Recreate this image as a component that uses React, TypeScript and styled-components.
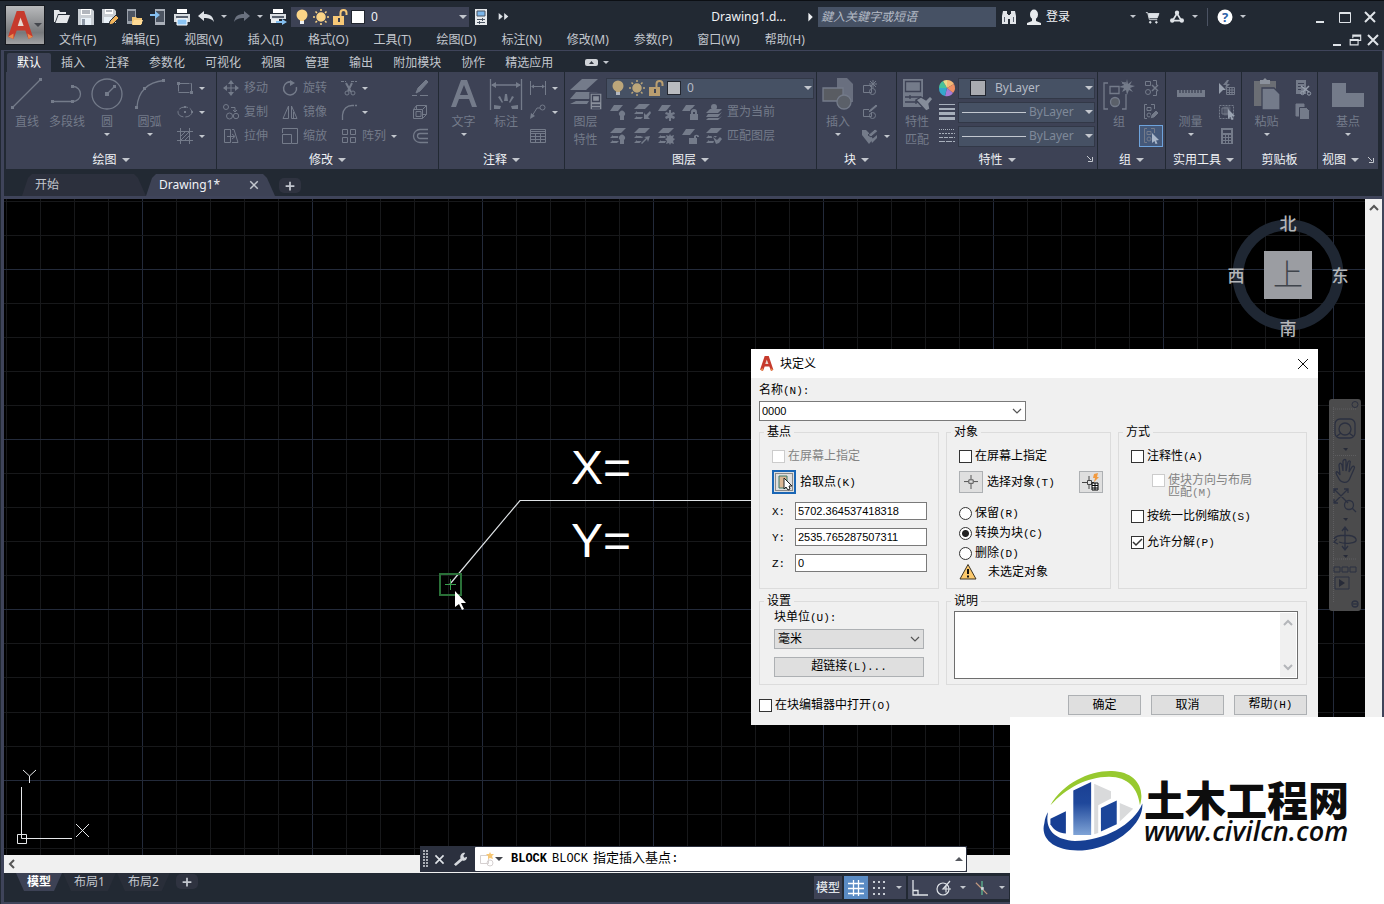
import React from "react";
import styled, { createGlobalStyle, css } from "styled-components";

const c = {
  chrome: "#222933",
  ribbon: "#3d4255",
  frame: "#3f445a",
  field: "#465164",
  text: "#c3c7ce",
  bright: "#f0f2f5",
  dim: "#747b8a",
  face: "#f0f0f0",
  faceLine: "#dcdcdc",
  button: "#dfdfdf",
  buttonLine: "#adb0b3",
};

const ui = `"Noto Sans", "Noto Sans CJK SC", sans-serif`;

const Global = createGlobalStyle`
  * { box-sizing: border-box; }
  body { margin: 0; background: ${c.chrome}; font-family: ${ui}; font-size: 12px; line-height: 16px; }
  button, input, select, textarea { font: inherit; color: inherit; margin: 0; border-radius: 0; }
  button { background: none; border: 0; padding: 0; }
  fieldset, legend { margin: 0; padding: 0; border: 0; }
  svg { display: block; flex: none; }
`;

/* ---------- icons ---------- */

const glyphs: Record<string, React.ReactNode> = {
  open: <g fill="#e4e7ea" stroke="none"><path d="M0 1h5l1 2h6v2H4L1 13H0z" /><path d="M4.500 6H16l-3 8H1.500z" /></g>,
  save: <g stroke="none"><path d="M0 0h14l2 2v14H0z" fill="#c9ced4" /><path d="M3 0h10v6H3z" fill="#fff" /><path d="M4 2h8M4 4h8" stroke="#666f7c" /><path d="M3 9h10v7H3z" fill="#e9f1f8" /><path d="M4 10h3v6H4z" fill="#8d97a5" /></g>,
  saveAs: <g stroke="none"><path d="M0 0h12l2 2v12H0z" fill="#c9ced4" /><path d="M3 0h8v5H3z" fill="#fff" /><path d="M4 2h6" stroke="#666f7c" /><path d="M2 8h8v6H2z" fill="#e9f1f8" /><path d="M7 16l1-4 6-6 3 3-6 6z" fill="#f1b45c" stroke="#222933" /></g>,
  openWeb: <g stroke="none"><path d="M1 0h9v15H1z" fill="#9aa1ab" /><path d="M2 2h7v10H2z" fill="#4c5461" /><path d="M6 8h4l1 1h5v6H6z" fill="#f3c878" /><path d="M8 11h9l-2 5H6z" fill="#ffdb96" /></g>,
  saveWeb: <g stroke="none"><path d="M5 0h10v16H5z" fill="#aab0b9" /><path d="M6 2h8v11H6z" fill="#4c5461" /><path d="M0 5h5V2l5 4-5 4V7H0z" fill="#85bff0" /></g>,
  print: <g stroke="none"><path d="M3 0h10v4H3z" fill="#fff" /><path d="M0 5h16v8H0z" fill="#d9dde1" /><path d="M2 7h12v2H2z" fill="#59616e" /><path d="M3 10h10v6H3z" fill="#8bc4f4" stroke="#fff" /></g>,
  batch: <g stroke="none"><path d="M3 0h10v4H3z" fill="#fff" /><path d="M0 5h16v5H0z" fill="#d9dde1" /><path d="M2 7h12v2H2z" fill="#59616e" /><path d="M1 10h8v4H1z" fill="#e9edf0" /><path d="M6 12h6v-2l5 3-5 3v-2H6z" fill="#85bff0" /></g>,
  undo: <path d="M0 7l6-5v3c6 0 9 2 10 8-2-3-5-4-10-4v3z" fill="currentColor" stroke="none" />,
  redo: <path d="M16 7l-6-5v3C4 5 1 7 0 13c2-3 5-4 10-4v3z" fill="currentColor" stroke="none" />,
  bulb: <g stroke="none"><circle cx="8" cy="6" r="5.500" fill="#fbd487" /><path d="M6 10h4v3H6z" fill="#fbd487" /><path d="M6 12h4v3H6z" fill="#eef0f2" /></g>,
  sun: <g stroke="#fbd487" strokeWidth="1.500"><circle cx="8" cy="8" r="4" fill="#fbd487" /><path d="M8 0v2M8 14v2M0 8h2M14 8h2M2.500 2.500l1.500 1.500M12 12l1.500 1.500M2.500 13.500L4 12M12 4l1.500-1.500" /></g>,
  lock: <g stroke="none"><path d="M1 7h11v9H1z" fill="#f7c877" /><path d="M8.500 7V4a3 3 0 0 1 6 0v2" fill="none" stroke="#f7c877" strokeWidth="2" /><path d="M6 9h2v4H6z" fill="#3d3f4c" /></g>,
  sheet: <g stroke="none"><path d="M2 0h12v16H2z" fill="#e6e9ec" /><path d="M4 2h8v5H4z" fill="#7bb6ea" stroke="#4a5361" /><path d="M4 10.500h8M4 13.500h8" stroke="#4a5361" /><path d="M9 9h1v3H9zM6 12h1v3H6z" fill="#4a5361" /></g>,
  more: <path d="M1 3l6 5-6 5zM9 3l6 5-6 5z" fill="currentColor" stroke="none" />,
  play: <path d="M5 3l5 5-5 5z" fill="currentColor" stroke="none" />,
  find: <g fill="#e2e5e9" stroke="none"><path d="M2 2h4v3h1v10H1V7zM10 2h4l1 5v8H9V5h1zM7 6h2v4H7z" /><path d="M3 8h1v5H3zM12 8h1v5h-1z" fill="#59616e" /></g>,
  user: <g fill="#e8ebee" stroke="none"><ellipse cx="8" cy="5.500" rx="4" ry="5" /><path d="M6 9h4v3l5 2v2H1v-2l5-2z" /></g>,
  cart: <g><path d="M1 3h2l2 8h9" stroke="currentColor" /><path d="M4 4h12l-2 5H5z" fill="currentColor" /><circle cx="6" cy="14" r="1" fill="currentColor" /><circle cx="13" cy="14" r="1" fill="currentColor" /></g>,
  a360: <g strokeWidth="2"><path d="M8 4L3 12h10z" /><circle cx="8" cy="3" r="1.500" fill="currentColor" /><circle cx="2.500" cy="12" r="1.500" fill="currentColor" /><circle cx="13.500" cy="12" r="1.500" fill="currentColor" /></g>,
  min: <path d="M4 13h8" strokeWidth="2" />,
  max: <path d="M2.500 3.500h11v10h-11zM2 4.500h12" />,
  close: <path d="M3 3l10 10M13 3L3 13" strokeWidth="2" />,
  restore: <path d="M5.500 6V2.500h9v6H12M5 3.500h10M2.500 7.500h9v6h-9zM2 8.500h10" strokeWidth="1.300" />,
  plus: <path d="M8 3v10M3 8h10" strokeWidth="2" />,
  rect: <g><path d="M1.500 3.500h13v9h-13z" strokeDasharray="11 1" /><path d="M0 2h3v3H0zM13 11h3v3h-3z" fill="currentColor" stroke="none" /></g>,
  ellipse: <g><ellipse cx="8" cy="8" rx="7" ry="5" strokeDasharray="9 2" /><path d="M7 7h2v2H7zM14 7h2v2h-2zM7 2h2v2H7z" fill="currentColor" stroke="none" /></g>,
  hatch: <path d="M3.500 0v16M12.500 0v16M0 3.500h16M0 12.500h16M4 8l4-4M4 12l8-8M8 12l4-4" />,
  move: <g><path d="M8 1v14M1 8h14" /><path d="M8 0l3 4H5zM8 16l3-4H5zM0 8l4-3v6zM16 8l-4-3v6z" fill="currentColor" stroke="none" /></g>,
  rotate: <g strokeWidth="1.500"><path d="M10 2.200A6.500 6.500 0 1 0 14.400 7" /><path d="M8 0l5 3-5 3z" fill="currentColor" stroke="none" /></g>,
  trim: <g><path d="M0 1.500h5M10 1.500h6" strokeDasharray="3 1" /><path d="M5 3l5 9M11 3L7 11" strokeWidth="2" /><circle cx="6" cy="13" r="2" /><circle cx="12" cy="13" r="2" /></g>,
  erase: <g><path d="M14 0l2 2-8 9-4 2 2-5z" fill="currentColor" /><path d="M0 15.500h5M8 15.500h8" /></g>,
  copy: <g><circle cx="3" cy="3" r="2.500" /><circle cx="6.500" cy="12" r="3" /><circle cx="13" cy="12" r="2.700" /><path d="M8 3.500h4v4M10 6l2 2 2-2" /></g>,
  mirror: <path d="M6.500 2v12.500H1zM9.500 2v12.500H15zM11.500 8v6" />,
  fillet: <g strokeWidth="1.300"><path d="M1.500 16v-5M1.500 11C2 5 6 1.500 11 1.500" /><path d="M11 1.500h5" strokeDasharray="2 1" /></g>,
  box: <path d="M1.500 5.500h9v9h-9zM4.500 5V1.500h10v9H11M1.500 5.500l3-4M10.500 5.500l4-4M10.500 14.500l4-4M4 7.500v5h5v-5z" />,
  stretch: <path d="M1.500 1.500h6v13h-6zM9 1.500h2l4 13H9M4 8.500h7M9 6l3 2.500L9 11" />,
  scale: <path d="M.500 5V.500h15v15H10M.500 6.500h9v9h-9z" />,
  array: <path d="M1.500 1.500h5v5h-5zM9.500 1.500h5v5h-5zM1.500 9.500h5v5h-5zM9.500 9.500h5v5h-5z" />,
  offset: <path d="M16 1.500H8a6.500 6.500 0 0 0 0 13h8M16 5.500H8a2.500 2.500 0 0 0 0 5h8" strokeWidth="1.300" />,
  dim: <g><path d="M.500 1v14M15.500 1v14M2 6.500h12" /><path d="M1 6.500l3-2v4zM15 6.500l-3-2v4z" fill="currentColor" stroke="none" /></g>,
  leader: <g><circle cx="12.500" cy="3.500" r="2.500" /><path d="M10 4H7L2 12" /><path d="M0 15l1-6 4 3z" fill="currentColor" stroke="none" /></g>,
  table: <path d="M.500 1.500h15v13H.500zM.500 5.500h15M.500 8.500h15M.500 11.500h15M5.500 5v9M10.500 5v9M1 3.500h15" />,
  layerOne: <path d="M4 1h9L8 7H0z" fill="currentColor" stroke="none" />,
  layers: <g fill="currentColor" stroke="none"><path d="M5 0h11l-5 5H0z" /><path d="M3 7l-3 3h9l2-2H3zM3 12l-3 3h7l2-2H3z" /></g>,
  layersUp: <g fill="currentColor" stroke="none"><circle cx="8" cy="3" r="3" /><path d="M4 5h12l-4 4H0zM2 10h11l3-2-4 5H0zM2 14h11l3-2-4 4H0z" /></g>,
  editBlock: <g><path d="M1.500 5.500h8v7h-8z" /><circle cx="10.500" cy="11.500" r="3" /><path d="M6 9l1-3 7-6 2 2-7 6z" fill="currentColor" stroke={c.ribbon} /></g>,
  newBlock: <g><path d="M1.500 5.500h8v7h-8z" /><circle cx="10.500" cy="11.500" r="3" /><path d="M11 0v8M7 4h8M8 1l6 6M14 1L8 7" /></g>,
  attr: <g fill="currentColor" stroke="none"><path d="M0 2h4l3 3 4 6-4 5-7-9z" /><path d="M6 7l7-6 3 2-7 6z" stroke={c.ribbon} /><path d="M9 12l6-5v3l-5 5z" /></g>,
  weights: <g fill="#a7afbb" stroke="none"><path d="M0 0h16v1H0zM0 4h16v2H0zM0 8h16v3H0zM0 13h16v3H0z" /></g>,
  types: <g stroke="#a7afbb"><path d="M0 1.500h16" strokeDasharray="1 1" /><path d="M0 5.500h16" strokeDasharray="2 1" /><path d="M0 9.500h16" strokeDasharray="4 1" /><path d="M0 13.500h16" strokeDasharray="6 1" /></g>,
  wheel: <g stroke="none"><path d="M8 8V0a8 8 0 0 1 7 4z" fill="#f4b876" /><path d="M8 8l7-4a8 8 0 0 1-1 9z" fill="#ef9064" /><path d="M8 8l6 5a8 8 0 0 1-8 3z" fill="#a77bd6" /><path d="M8 8l-2 8a8 8 0 0 1-6-8z" fill="#35a8cc" /><path d="M8 8H0a8 8 0 0 1 4-7z" fill="#48c29a" /><path d="M8 8L4 1a8 8 0 0 1 4-1z" fill="#e7dc8c" /></g>,
  ungroup: <g><path d="M2.500 1.500h5v4h-5zM10 .500h3.500V5M13.500 11v4.500H10" /><circle cx="5" cy="12" r="2.500" /><path d="M9 5l6 6M15 5l-6 6" strokeWidth="1.500" /></g>,
  editGroup: <g><path d="M4 .500H1.500v14H4M8 .500h3.500V5M4 3.500h4v3H4z" /><circle cx="6" cy="11" r="2" /><path d="M7 15l1-4 5-5 3 3-5 5z" fill="currentColor" stroke={c.ribbon} /></g>,
  selGroup: <g><path d="M4 .500H1.500v14H4M8 .500h3.500V5M4 3.500h4v3H4z" /><circle cx="6" cy="11" r="2" /><path d="M9 5l7 7-3 .500 1.500 3-2 .500-1-3L9 15z" fill="#a9b6c9" stroke="none" /></g>,
  quickSel: <g><path d="M0 3l7 7H4l-4 4z" fill="#969eac" stroke="none" /><path d="M8 0L4 5h3l-1 4 5-5H8l2-4z" fill="currentColor" stroke="none" /><path d="M7.500 7.500h8v7h-8zM7 10h9M7 12.500h9M10.500 7v8M13 7v8" /></g>,
  selAll: <g><path d="M.500 1.500h14v13H.500z" strokeDasharray="2 1" /><path d="M3 4h6v6H3z" /><path d="M5 3h6v8H5z" fill="currentColor" opacity=".5" /><path d="M9 5l7 7-3 .500 1.500 3-2 .500-1-3L9 15z" fill="#9aa3b1" stroke="none" /></g>,
  calc: <g stroke="none" fill="currentColor"><path d="M2 0h12v16H2z" /><path d="M4 2h8v3H4zM4 7h2v2H4zM7 7h2v2H7zM10 7h2v2h-2zM4 10h2v2H4zM7 10h2v2H7zM10 10h2v2h-2zM4 13h2v2H4zM7 13h2v2H7zM10 13h2v2h-2z" fill={c.ribbon} /></g>,
  cut: <g><path d="M1 0h10v14H1z" fill="currentColor" stroke="none" /><path d="M3 3.500h6M3 6.500h6M3 9.500h3" stroke={c.ribbon} /><path d="M6 6l8 6M14 6l-6 6" strokeWidth="1.500" stroke="#969eac" /><circle cx="7.500" cy="13" r="1.700" stroke="#969eac" /><circle cx="14" cy="13.500" r="1.700" stroke="#969eac" /></g>,
  clip: <g><path d="M1 0h8v12H1z" fill="currentColor" /><path d="M4.500 3.500h7l3 3v9h-10z" fill="currentColor" stroke={c.ribbon} /></g>,
  gridOn: <path d="M5.500 0v16M10.500 0v16M0 3.500h16M0 8.500h16M0 13.500h16" stroke="#fff" strokeWidth="1.300" />,
  dots: <g fill="#c9ced6" stroke="none"><path d="M1 1h2v2H1zM6 1h2v2H6zM11 1h2v2h-2zM1 7h2v2H1zM6 7h2v2H6zM11 7h2v2h-2zM1 13h2v2H1zM6 13h2v2H6zM11 13h2v2h-2z" /></g>,
  ortho: <path d="M1 0v15h15M1 10.500h5V15" strokeWidth="1.300" />,
  polar: <g strokeWidth="1.200"><circle cx="7" cy="9" r="6" /><path d="M15 9H7l7-8M10 5.500v7" /></g>,
  iso: <g><path d="M1 2l13 13" stroke="#c59a80" strokeWidth="1.300" /><path d="M8 0v16" stroke="#64c89a" strokeWidth="1.300" /><path d="M7 7h3v3H7z" fill="#d5dae0" stroke="none" /></g>,
  wrench: <path d="M1 13l7-6c-1-4 2-7 5-6l-2 3 1 2 3-1c0 4-3 5-5 4l-7 6z" fill="#d6d9de" stroke="none" />,
  crosshair: <path d="M8 0v5M8 10v6M0 7.500h5M11 7.500h5M5.500 5.500h5v4h-5z" stroke="#444" />,
};

const Svg = styled.svg.attrs({ viewBox: "0 0 16 16", fill: "none", stroke: "currentColor" })<{ $s?: number }>`
  width: ${(p) => p.$s ?? 16}px;
  height: ${(p) => p.$s ?? 16}px;
  overflow: visible;
`;
const Icon = ({ n, s }: { n: string; s?: number }) => <Svg $s={s} aria-hidden="true">{glyphs[n]}</Svg>;

const Caret = styled.span<{ $size?: number; $dark?: boolean }>`
  flex: none;
  width: ${(p) => (p.$size ?? 3) * 2}px;
  height: 0;
  border: ${(p) => p.$size ?? 3}px solid transparent;
  border-top-color: currentColor;
  border-bottom: 0;
  color: ${(p) => (p.$dark ? "#44474d" : c.text)};
  pointer-events: none;
`;

/* ---------- title bar ---------- */

const Shell = styled.div`
  position: relative;
  display: flex;
  flex-direction: column;
  min-height: 100vh;
  min-width: 1340px;
  overflow: hidden;
  background: ${c.chrome};
  color: ${c.text};
`;
const Header = styled.header`
  display: flex;
  padding: 2px 2px 0 5px;
  border-top: 1px solid #0c0f14;
`;
const AppButton = styled.button`
  display: flex;
  align-items: center;
  justify-content: center;
  width: 40px;
  height: 40px;
  margin-top: 2px;
  border: 1px solid #16191f;
  background: linear-gradient(#b9babc, #77797c 70%, #a2a3a5);
`;
const HeaderRows = styled.div`
  flex: 1;
  min-width: 0;
`;
const TitleRow = styled.div`
  display: flex;
  align-items: center;
  height: 27px;
  padding-left: 5px;
  color: ${c.bright};
`;
const Tool = styled.button<{ $w?: number; $off?: boolean }>`
  display: flex;
  align-items: center;
  justify-content: center;
  flex: none;
  width: ${(p) => p.$w ?? 24}px;
  height: 22px;
  color: ${(p) => (p.$off ? "#6b7280" : "#dfe3e8")};
`;
const QuickLayer = styled.label`
  display: flex;
  align-items: center;
  gap: 3px;
  width: 178px;
  height: 20px;
  margin-left: 1px;
  padding: 0 2px 0 3px;
  background: ${c.ribbon};
`;
const Swatch = styled.span<{ $s: number; $c: string }>`
  flex: none;
  width: ${(p) => p.$s}px;
  height: ${(p) => p.$s}px;
  background: ${(p) => p.$c};
  border: 1px solid #22262f;
`;
const BareSelect = styled.select`
  appearance: none;
  flex: 1;
  min-width: 0;
  padding: 0;
  border: 0;
  outline: 0;
  background: transparent;
`;
const QuickSelect = styled(BareSelect)`
  padding-left: 3px;
`;
const DocTitle = styled.h1`
  margin: 0 0 0 auto;
  font-size: 12px;
  font-weight: 400;
`;
const TitleArrow = styled.span`
  display: flex;
  justify-content: flex-end;
  width: 32px;
`;
const Search = styled.input`
  width: 178px;
  height: 20px;
  padding: 0 3px;
  border: 0;
  background: ${c.field};
  font-style: italic;
  &::placeholder { color: #b4bbc6; opacity: 1; }
`;
const SignIn = styled.button`
  width: 81px;
  text-align: left;
`;
const Divider = styled.span`
  width: 1px;
  height: 18px;
  margin: 0 5px 0 6px;
  background: #4b5363;
`;
const WindowTools = styled.div`
  display: flex;
  margin-left: auto;
`;
const Tail = styled(WindowTools)`
  margin-left: 58px;
`;
const MenuRow = styled.nav`
  display: flex;
  align-items: center;
  gap: 25px;
  height: 20px;
  padding-left: 14px;
  a { color: ${c.text}; text-decoration: none; white-space: nowrap; }
`;

/* ---------- workspace and ribbon ---------- */

const Workspace = styled.div`
  flex: 1;
  display: flex;
  flex-direction: column;
  margin-left: 1px;
  border: solid ${c.frame};
  border-width: 1px 2px 2px 3px;
`;
const RibbonTabs = styled.div`
  display: flex;
  align-items: flex-end;
  height: 21px;
  padding-left: 3px;
`;
const RibbonTab = styled.button<{ $on?: boolean }>`
  height: 19px;
  padding: 0 10px;
  white-space: nowrap;
  ${(p) => p.$on && css`background: ${c.ribbon}; color: #fff; border-radius: 2px 2px 0 0;`}
`;
const Minimize = styled.button`
  display: flex;
  align-items: center;
  gap: 5px;
  height: 19px;
  margin-left: 22px;
`;
const Ribbon = styled.div`
  display: flex;
  gap: 1px;
  padding-left: 2px;
`;
const PanelBox = styled.section<{ $w: number }>`
  flex: none;
  width: ${(p) => p.$w}px;
  padding-top: 4px;
  background: ${c.ribbon};
  color: ${c.dim};
`;
const PanelBody = styled.div`
  display: flex;
  height: 72px;
`;
const PanelTitle = styled.h2`
  position: relative;
  display: flex;
  align-items: center;
  justify-content: center;
  gap: 5px;
  height: 21px;
  margin: 0;
  padding-top: 2px;
  font-size: 12px;
  font-weight: 400;
  color: ${c.bright};
`;
const Launcher = styled.button`
  margin-left: 4px;
  color: ${c.text};
`;
const Corner = styled(Launcher)`
  position: absolute;
  right: 4px;
  top: 8px;
`;
const Big = styled.button<{ $w: number }>`
  display: flex;
  flex-direction: column;
  align-items: center;
  flex: none;
  width: ${(p) => p.$w}px;
  padding-top: 2px;
  line-height: 18px;
  white-space: nowrap;
  svg { margin-bottom: 3px; overflow: visible; }
  ${Caret} { margin-top: 2px; }
`;
const Stack = styled.div<{ $w?: number; $pad?: number }>`
  flex: ${(p) => (p.$w ? "none" : "1")};
  width: ${(p) => (p.$w ? `${p.$w}px` : "auto")};
  padding-left: ${(p) => p.$pad ?? 6}px;
`;
const Line = styled.div`
  display: flex;
  align-items: center;
  gap: 8px;
  height: 24px;
`;
const LayerLine = styled(Line)`
  padding-left: 4px;
`;
const PropLine = styled(Line)`
  gap: 3px;
`;
const Small = styled.button<{ $on?: boolean }>`
  display: flex;
  align-items: center;
  gap: 5px;
  height: 24px;
  white-space: nowrap;
  ${(p) => p.$on && css`width: 24px; height: 22px; margin: 1px 0 0 -4px; padding-left: 3px; border: 1px solid #6ea3dc; background: #45597a;`}
`;
const Combo = styled.label<{ $dim?: boolean; $pad?: number; $gap?: number }>`
  display: flex;
  align-items: center;
  gap: ${(p) => p.$gap ?? 3}px;
  flex: 1;
  min-width: 0;
  height: 21px;
  margin-right: 2px;
  padding: 0 1px 0 ${(p) => p.$pad ?? 3}px;
  border: 1px solid #323847;
  background: ${c.field};
  color: ${(p) => (p.$dim ? "#7f8999" : "#b4bac4")};
`;
const Muted = styled.span`
  display: flex;
  gap: 3px;
  opacity: 0.65;
`;
const Rule = styled.span`
  width: 64px;
  height: 1px;
  background: #c3c8d0;
`;
const Badged = styled.span`
  display: grid;
  width: 16px;
  height: 16px;
  > svg { grid-area: 1 / 1; }
`;

const layerBadges: Record<string, React.ReactNode> = {
  bulb: <path d="M10 12a3 3 0 1 1 4 0v4h-4z" />,
  arrow: <path d="M16 7l-4 4-2-2v6h6l-2-2 3-4z" />,
  flake: <path d="M11 6h2v3l3-1 1 2-3 1 3 2-1 2-3-1v3h-2v-3l-3 1-1-2 3-2-3-1 1-2 3 1z" />,
  sun: <path d="M12 6l1 2 3-1-1 3 2 1-2 2 1 3-3-1-1 2-1-2-3 1 1-3-2-2 2-1-1-3 3 1z" />,
  lock: <path d="M8 10h1V8a3 3 0 0 1 6 0v2h1v6H8zM11 10h2V8h-2z" />,
  unlock: <path d="M7 10h5V8a3 3 0 0 1 5 0v1h-2V8h-1v2h1v6H7z" />,
  up: <path d="M16 8l-6 1 2 1-5 5 1 1 5-5 1 3z" />,
  brush: <path d="M7 9l4 3 3-3 2 2-3 4-3 1z" />,
  none: null,
};
const LayerIcon = ({ base = "layerOne", badge }: { base?: string; badge: string }) => (
  <Badged>
    <Icon n={base} />
    <Svg><g fill="currentColor" stroke={c.ribbon} strokeWidth="2" paintOrder="stroke">{layerBadges[badge]}</g></Svg>
  </Badged>
);

type PanelProps = { w: number; title: string; menu?: boolean; corner?: boolean; launcher?: boolean; children: React.ReactNode };
const ArrowCorner = () => <svg width="6" height="6" viewBox="0 0 6 6" stroke="currentColor" fill="none"><path d="M0 0l4 4M5.500 1v4.500H1" /></svg>;
const Panel = ({ w, title, menu = true, corner, launcher, children }: PanelProps) => (
  <PanelBox $w={w}>
    <PanelBody>{children}</PanelBody>
    <PanelTitle>
      {title}
      {menu && <Caret $size={4} />}
      {launcher && <Launcher aria-label={title}><ArrowCorner /></Launcher>}
      {corner && <Corner aria-label={title}><ArrowCorner /></Corner>}
    </PanelTitle>
  </PanelBox>
);
const Art = ({ children }: { children: React.ReactNode }) => (
  <svg width="32" height="32" viewBox="0 0 32 32" fill="none" stroke="currentColor" strokeWidth="1.300">{children}</svg>
);

/* ---------- document tabs ---------- */

const FileTabs = styled.div`
  display: flex;
  align-items: flex-end;
  height: 30px;
  padding-left: 18px;
  border-bottom: 3px solid ${c.frame};
`;
const FileTab = styled.div<{ $on?: boolean }>`
  display: flex;
  align-items: center;
  justify-content: space-between;
  width: ${(p) => (p.$on ? 129 : 124)}px;
  height: 22px;
  padding: 0 15px 0 13px;
  background: ${(p) => (p.$on ? c.ribbon : "#2c303d")};
  color: ${(p) => (p.$on ? c.bright : c.text)};
  clip-path: polygon(0 100%, 6px 4px, 10px 0, calc(100% - 12px) 0, calc(100% - 8px) 4px, 100% 100%);
  button { color: ${c.text}; }
`;
const AddTab = styled.button`
  display: flex;
  align-items: center;
  justify-content: center;
  width: 22px;
  height: 15px;
  margin: 0 0 3px 4px;
  border-radius: 5px;
  background: #2f3340;
`;

/* ---------- drawing area ---------- */

const Stage = styled.main`
  position: relative;
  flex: 1;
  display: grid;
  grid-template: minmax(560px, 1fr) 18px / 1fr 17px;
`;
const Canvas = styled.div`
  position: relative;
  overflow: hidden;
  background: #000;
`;
const Plot = styled.svg`
  position: absolute;
  width: 100%;
  height: 100%;
`;
const Compass = styled.svg`
  position: absolute;
  top: 11px;
  right: 14px;
`;
const NavBar = styled.div`
  position: absolute;
  top: 200px;
  right: 4px;
`;
const Scroll = styled.div<{ $row?: boolean }>`
  display: flex;
  padding: 4px;
  background: ${c.face};
  color: #555;
  ${(p) => p.$row && css`grid-column: 1 / -1;`}
`;
const CommandBar = styled.div`
  position: absolute;
  left: 416px;
  bottom: 1px;
  display: flex;
  align-items: center;
  width: 547px;
  height: 26px;
  background: #2b303e;
`;
const CommandField = styled.div`
  display: flex;
  align-items: center;
  flex: 1;
  height: 24px;
  margin-right: 1px;
  padding: 0 2px 0 4px;
  background: #fff;
  color: #000;
  border-radius: 1px;
`;
const CommandText = styled.label`
  display: flex;
  gap: 5px;
  margin-left: 8px;
  font-family: "Liberation Mono", "Noto Sans CJK SC", monospace;
`;
const Prompt = styled.span`
  font-size: 13px;
`;
const CommandInput = styled.input`
  flex: 1;
  min-width: 0;
  border: 0;
  outline: 0;
  background: none;
`;
const Footer = styled.footer`
  display: flex;
  height: 29px;
  padding-left: 12px;
`;
const LayoutTab = styled.button<{ $on?: boolean }>`
  height: 18px;
  padding: 0 11px;
  margin-right: 1px;
  background: ${(p) => (p.$on ? c.ribbon : "#292e39")};
  color: ${(p) => (p.$on ? "#fff" : c.text)};
  font-weight: ${(p) => (p.$on ? 700 : 400)};
  clip-path: polygon(0 0, 100% 0, calc(100% - 8px) 100%, 8px 100%);
`;
const AddLayout = styled(AddTab)`
  margin: 1px 0 0 5px;
`;
const StatusGroup = styled.div`
  display: flex;
  align-items: center;
  height: 23px;
  margin: 3px 2px 0 0;
  background: ${c.ribbon};
  color: #dfe3e8;
`;
const StatusSide = styled.div`
  display: flex;
  margin-left: auto;
  padding-right: 371px;
`;
const StatusBtn = styled(Tool)<{ $on?: boolean }>`
  height: 23px;
  background: ${(p) => (p.$on ? "#5a8bc4" : "none")};
  color: #dfe3e8;
`;
const ModelBtn = styled.button`
  width: 28px;
  height: 23px;
  font-weight: 500;
  white-space: nowrap;
`;

/* ---------- dialog ---------- */

const Dialog = styled.div`
  position: absolute;
  left: 747px;
  top: 150px;
  width: 567px;
  background: ${c.face};
  color: #000;
  font-family: "Liberation Sans", "Noto Sans CJK SC", sans-serif;
  line-height: 16px;
`;
const DialogBar = styled.div`
  display: flex;
  align-items: center;
  gap: 5px;
  height: 29px;
  padding: 0 8px;
  background: #fff;
  button { margin-left: auto; }
`;
const DialogBody = styled.form`
  padding: 5px 11px 10px 8px;
`;
const Mono = styled.span`
  font-family: "Liberation Mono", monospace;
  font-size: 11px;
`;
const FieldLabel = styled.label`
  display: block;
  line-height: 14px;
`;
const NameBox = styled.div`
  display: flex;
  align-items: center;
  width: 267px;
  height: 20px;
  margin: 3px 0 4px;
  padding: 0 3px 0 2px;
  border: 1px solid #7a7a7a;
  background: #fff;
  input { flex: 1; min-width: 0; padding: 0; border: 0; outline: 0; font-size: 11px; }
  svg { color: #555; }
`;
const Groups = styled.div`
  display: grid;
  grid-template-columns: 180px 165px 1fr;
  gap: 5px 7px;
`;
const Group = styled.fieldset<{ $wide?: boolean }>`
  min-width: 0;
  border: 1px solid ${c.faceLine};
  ${(p) => p.$wide && css`grid-column: span 2;`}
  legend { margin-left: 4px; padding: 0 3px; line-height: 14px; }
`;
const Fields = styled.div<{ $gap: number }>`
  display: flex;
  flex-direction: column;
  gap: ${(p) => p.$gap}px;
  height: 149px;
  padding: 9px 7px 0 12px;
`;
const Row = styled.div<{ $h?: number }>`
  display: flex;
  align-items: center;
  gap: 4px;
  height: ${(p) => p.$h ?? 16}px;
  white-space: nowrap;
`;
const Radios = styled.div`
  margin-top: 3px;
`;
const Coords = styled.div`
  display: flex;
  flex-direction: column;
  gap: 8px;
  margin-top: 2px;
`;
const Notice = styled.div`
  display: flex;
  align-items: center;
  gap: 11px;
  height: 18px;
`;
const Check = styled.label<{ $off?: boolean; $inset?: boolean }>`
  display: flex;
  align-items: center;
  gap: 3px;
  min-height: 16px;
  white-space: nowrap;
  color: ${(p) => (p.$off ? "#838383" : "#000")};
  ${(p) => p.$inset && css`align-items: flex-start; padding-left: 21px; line-height: 12px;`}
  input {
    appearance: none;
    flex: none;
    width: 13px;
    height: 13px;
    border: 1px solid ${(p) => (p.$off ? "#ccc" : "#333")};
    background: #fff center / 11px 11px no-repeat;
  }
  input[type="radio"] { border-radius: 50%; }
  input[type="radio"]:checked { background-image: radial-gradient(circle, #222 3px, transparent 4px); }
  input[type="checkbox"]:checked { background-image: url("data:image/svg+xml,%3Csvg xmlns='http://www.w3.org/2000/svg' viewBox='0 0 11 11' fill='none' stroke='%23333' stroke-width='1.500'%3E%3Cpath d='M1 5l3 3 6-6'/%3E%3C/svg%3E"); }
`;
const IconButton = styled.button<{ $focus?: boolean; $end?: boolean }>`
  display: flex;
  align-items: center;
  justify-content: center;
  width: 24px;
  height: ${(p) => (p.$focus ? 24 : 22)}px;
  margin-left: ${(p) => (p.$end ? "auto" : "0")};
  border: ${(p) => (p.$focus ? "2px solid #1a66b5" : `1px solid ${c.buttonLine}`)};
  background: ${c.button};
`;
const Coord = styled.label`
  display: flex;
  align-items: center;
  height: 18px;
  > span { width: 23px; }
  input { width: 132px; height: 18px; padding: 0 2px; border: 1px solid #7a7a7a; background: #fff; font-size: 11px; }
`;
const Push = styled.button<{ $w?: number }>`
  width: ${(p) => (p.$w ? `${p.$w}px` : "100%")};
  height: 20px;
  border: 1px solid ${c.buttonLine};
  background: ${c.button};
  line-height: 17px;
`;
const UnitBox = styled.div`
  display: flex;
  align-items: center;
  height: 20px;
  padding: 0 3px;
  border: 1px solid ${c.buttonLine};
  background: ${c.button};
  svg { color: #555; }
`;
const SettingFields = styled.div`
  display: flex;
  flex-direction: column;
  padding: 2px 14px 0 14px;
  ${UnitBox} { margin: 4px 0 8px; }
`;
const NoteBox = styled.div`
  display: flex;
  height: 68px;
  margin: 3px 8px 5px 7px;
  border: 1px solid #6e6e6e;
  background: #fff;
  textarea { flex: 1; border: 0; outline: 0; resize: none; background: none; }
`;
const Rail = styled.div`
  display: flex;
  flex-direction: column;
  justify-content: space-between;
  width: 16px;
  margin: 1px;
  padding: 5px 3px;
  background: ${c.face};
  color: #b4b6ba;
`;
const Actions = styled.div`
  display: flex;
  align-items: center;
  gap: 10px;
  margin-top: 10px;
  label { margin-right: auto; }
`;
const Chevron = ({ d = "M1 3l4 4 4-4", w = 1.2 }: { d?: string; w?: number }) => (
  <svg width="10" height="10" viewBox="0 0 10 10" fill="none" stroke="currentColor" strokeWidth={w}><path d={d} /></svg>
);

/* ---------- brand banner ---------- */

const Banner = styled.aside`
  position: absolute;
  right: 0;
  bottom: 0;
  display: flex;
  align-items: center;
  width: 374px;
  height: 187px;
  padding-left: 33px;
  background: #fff;
  color: #0d0d0d;
`;
const BrandText = styled.div`
  padding-top: 4px;
  white-space: nowrap;
  strong { display: block; font: 900 41px/36px "Noto Sans CJK SC", sans-serif; }
  span { display: block; font: italic 600 27px/30px "Open Sans", "Noto Sans", sans-serif; }
`;

const menus = ["文件(F)", "编辑(E)", "视图(V)", "插入(I)", "格式(O)", "工具(T)", "绘图(D)", "标注(N)", "修改(M)", "参数(P)", "窗口(W)", "帮助(H)"];
const tabs = ["默认", "插入", "注释", "参数化", "可视化", "视图", "管理", "输出", "附加模块", "协作", "精选应用"];
const PITCH = 170.2;
const lines = Array.from({ length: 80 }, (_, i) => i - 5);

const LetterA = ({ w, h }: { w: number; h: number }) => (
  <svg width={w} height={h} viewBox="0 0 24 26">
    <path d="M8 0h7l8 24-4 2-3-8H8l-3 8-5-2z" fill="#c63a2c" />
    <path d="M11.500 6l3 8H9z" fill="#e9d8d0" />
    <path d="M0 24l5-3v5zM23 24l-5-3 1 5z" fill="#e98a4e" />
  </svg>
);

function Drawing() {
  return (
    <Plot aria-label="绘图">
      <g shapeRendering="crispEdges">
        {lines.map((i) => <path key={`v${i}`} d={`M${Math.round(138 + (i * PITCH) / 5) + 0.5} 0v4000`} stroke={i % 5 ? "#17181a" : "#232a3a"} />)}
        {lines.map((i) => <path key={`h${i}`} d={`M0 ${Math.round(70 + (i * PITCH) / 5) + 0.5}h4000`} stroke={i % 5 ? "#17181a" : "#232a3a"} />)}
      </g>
      <path d="M446 385L516 301.500H760" fill="none" stroke="#dfe3e6" strokeWidth="1.200" />
      <g fill="#fff" fontFamily="Liberation Sans, sans-serif" fontSize="48">
        <text x="567" y="285">X=</text>
        <text x="567" y="358">Y=</text>
      </g>
      <path d="M436 375h21v21h-21z" fill="none" stroke="#2a7038" strokeWidth="2" />
      <path d="M441 385.500h11M446.500 380v11" stroke="#38a04c" />
      <path d="M451 392v16l4-3 3 6 2-1-3-6h5z" fill="#fff" />
      <g stroke="#e6e8ea" fill="none">
        <path d="M17.500 588v51.500H68M13.500 635.500h9v9h-9z" />
        <path d="M19 571l6.500 6 6.500-6M25.500 577v7M72 625l13 13M85 625l-13 13" />
      </g>
    </Plot>
  );
}

function ViewCube() {
  return (
    <Compass width="126" height="130" viewBox="0 0 126 130">
      <circle cx="63" cy="65" r="50" fill="none" stroke="#1f2733" strokeWidth="11" />
      <path d="M39 41h48v48H39z" fill="#9b9da2" />
      <g fontFamily="Noto Sans CJK SC, sans-serif" textAnchor="middle">
        <text x="63" y="75" fontSize="30" fontWeight="300" fill="#3f444b">上</text>
        <g fontSize="17" fontWeight="500" fill="#b4b6b9">
          <text x="63" y="20">北</text>
          <text x="63" y="125">南</text>
          <text x="11" y="72">西</text>
          <text x="115" y="72">东</text>
        </g>
      </g>
    </Compass>
  );
}

function Navigation() {
  return (
    <NavBar>
      <svg width="32" height="212" viewBox="0 0 32 212" fill="none" stroke="#2b3040" strokeWidth="1.300">
        <rect width="32" height="212" rx="3" fill="#4b4b4c" stroke="none" />
        <path d="M4.500 8v196M4 10h24M4 56.500h24M4 160h24" stroke="#5e5e60" strokeDasharray="1 1" strokeWidth="1" />
        <circle cx="26" cy="5.500" r="3" strokeWidth="1" />
        <rect x="6" y="20" width="20" height="19" rx="5" /><circle cx="16" cy="30" r="6" /><path d="M8 37l4-3M24 37l-4-3" />
        <path d="M9 78c-4-6-1-7 2-2l-1-10c1-3 2-2 3 0l1 6V62c1-2 3-2 3 0v10l2-9c1-2 3-1 2 1l-1 9 3-5c2-2 3 0 2 2l-4 9c-2 6-9 6-12-1z" />
        <path d="M5 90l14 14M19 90L5 104M5 94v-4h4M15 90h4v4M5 100v4h4" /><circle cx="20" cy="106" r="4.500" /><path d="M23 109l4 4" />
        <path d="M16 128v22M13 132l3-4 3 4M13 147l3 4 3-4M5 140c2-5 20-5 22 0s-12 5-17 3M8 140l-3 3 4 2" />
        <path d="M5 168h6v5H5zM13 168h6v5h-6zM21 168h6v5h-6zM6 178h14v12H6z" strokeWidth="1" />
        <path d="M10 180l6 4-6 4zM14 49h5l-2 3zM14 119h5l-2 3zM14 156h5l-2 3z" fill="#272b38" stroke="none" />
        <circle cx="26" cy="205" r="3" /><path d="M24 205h4" />
      </svg>
    </NavBar>
  );
}

function BlockDialog() {
  return (
    <Dialog role="dialog" aria-label="块定义">
      <DialogBar>
        <LetterA w={16} h={15} />
        块定义
        <button aria-label="关闭"><svg width="14" height="14" viewBox="0 0 14 14" stroke="#111"><path d="M2 2l10 10M12 2L2 12" /></svg></button>
      </DialogBar>
      <DialogBody onSubmit={(e) => e.preventDefault()}>
        <FieldLabel htmlFor="name">名称<Mono>(N):</Mono></FieldLabel>
        <NameBox><input id="name" defaultValue="0000" /><Chevron /></NameBox>
        <Groups>
          <Group>
            <legend>基点</legend>
            <Fields $gap={7}>
              <Check $off><input type="checkbox" disabled />在屏幕上指定</Check>
              <Row $h={22}>
                <IconButton type="button" $focus aria-label="拾取点">
                  <svg width="18" height="18" viewBox="0 0 18 18" fill="none">
                    <path d="M.500 .500h17v17H.500z" stroke="#333" strokeDasharray="1 1" />
                    <path d="M4 3h8v12H4z" fill="#dcb794" stroke="#3c7a68" />
                    <path d="M9 5v11l2-2 2 3 2-1-1-3h3z" fill="#fff" stroke="#222" />
                  </svg>
                </IconButton>
                <span>拾取点<Mono>(K)</Mono></span>
              </Row>
              <Coords>
                {[["X", "5702.364537418318"], ["Y", "2535.765287507311"], ["Z", "0"]].map(([k, v]) => (
                  <Coord key={k}><span><Mono>{k}:</Mono></span><input defaultValue={v} /></Coord>
                ))}
              </Coords>
            </Fields>
          </Group>
          <Group>
            <legend>对象</legend>
            <Fields $gap={7}>
              <Check><input type="checkbox" />在屏幕上指定</Check>
              <Row $h={22}>
                <IconButton type="button" aria-label="选择对象"><Icon n="crosshair" s={14} /></IconButton>
                <span>选择对象<Mono>(T)</Mono></span>
                <IconButton type="button" $end aria-label="快速选择">
                  <svg width="18" height="18" viewBox="0 0 18 18" fill="none" stroke="#444">
                    <path d="M7 3v5M7 12v4M0 9.500h5M9 9.500h3M5.500 7.500h4v4h-4z" />
                    <path d="M12 1l4-1-1 4h2l-5 5 1-4h-2z" fill="#f29a3f" stroke="none" />
                    <path d="M10 10h6v7h-6z" fill="#fff" stroke="#000" /><path d="M10 12.500h6M10 15h6M13 10v7" stroke="#000" />
                  </svg>
                </IconButton>
              </Row>
              <Radios>
                {["保留|(R)", "转换为块|(C)", "删除|(D)"].map((t, i) => {
                  const [name, key] = t.split("|");
                  return (
                    <Row key={t} $h={20}>
                      <Check><input type="radio" name="mode" defaultChecked={i === 1} /><span>{name}<Mono>{key}</Mono></span></Check>
                    </Row>
                  );
                })}
                <Notice>
                  <svg width="18" height="18" viewBox="0 0 18 18"><path d="M9 1.500L17 16H1z" fill="#fcc96c" stroke="#3b3222" strokeLinejoin="round" /><path d="M8 6h2v5H8zM8 12.500h2v2H8z" fill="#111" /></svg>
                  未选定对象
                </Notice>
              </Radios>
            </Fields>
          </Group>
          <Group>
            <legend>方式</legend>
            <Fields $gap={9}>
              <Check><input type="checkbox" /><span>注释性<Mono>(A)</Mono></span></Check>
              <Check $off $inset><input type="checkbox" disabled /><span>使块方向与布局<br />匹配<Mono>(M)</Mono></span></Check>
              <Check><input type="checkbox" /><span>按统一比例缩放<Mono>(S)</Mono></span></Check>
              <Check><input type="checkbox" defaultChecked /><span>允许分解<Mono>(P)</Mono></span></Check>
            </Fields>
          </Group>
          <Group>
            <legend>设置</legend>
            <SettingFields>
              <FieldLabel htmlFor="unit">块单位<Mono>(U):</Mono></FieldLabel>
              <UnitBox><BareSelect id="unit"><option>毫米</option></BareSelect><Chevron /></UnitBox>
              <Push type="button">超链接<Mono>(L)...</Mono></Push>
            </SettingFields>
          </Group>
          <Group $wide>
            <legend>说明</legend>
            <NoteBox>
              <textarea aria-label="说明" />
              <Rail><Chevron d="M1 7l4-4 4 4" w={2} /><Chevron w={2} /></Rail>
            </NoteBox>
          </Group>
        </Groups>
        <Actions>
          <Check><input type="checkbox" /><span>在块编辑器中打开<Mono>(O)</Mono></span></Check>
          <Push type="submit" $w={73}>确定</Push>
          <Push type="button" $w={73}>取消</Push>
          <Push type="button" $w={73}>帮助<Mono>(H)</Mono></Push>
        </Actions>
      </DialogBody>
    </Dialog>
  );
}

function RibbonPanels() {
  return (
    <Ribbon>
      <Panel w={210} title="绘图">
        <Big $w={42}><Art><path d="M2 29L29 2" /><path d="M0 28h3v3H0zM28 0h3v3h-3z" fill="currentColor" stroke="none" /></Art>直线</Big>
        <Big $w={38}><Art><path d="M2 23.500h20a7 7 0 0 0 0-15" /><path d="M0 22h3v3H0zM20 22h3v3h-3zM20 7h3v3h-3z" fill="currentColor" stroke="none" /></Art>多段线</Big>
        <Big $w={42}><Art><circle cx="16" cy="16" r="15" /><path d="M16 16l7-7" /><path d="M14 14h4v4h-4zM22 7h3v3h-3z" fill="currentColor" stroke="none" /></Art>圆<Caret /></Big>
        <Big $w={43}><Art><path d="M3 29C4 14 13 4 30 2.500" /><path d="M1 28h3v3H1zM28 1h3v3h-3zM9 9h3v3H9z" fill="currentColor" stroke="none" /></Art>圆弧<Caret /></Big>
        <Stack>
          {["rect", "ellipse", "hatch"].map((n) => <Small key={n} aria-label={n}><Icon n={n} /><Spacer /><Caret /></Small>)}
        </Stack>
      </Panel>
      <Panel w={221} title="修改">
        <Stack $w={59}>
          <Small><Icon n="move" />移动</Small><Small><Icon n="copy" />复制</Small><Small><Icon n="stretch" />拉伸</Small>
        </Stack>
        <Stack $w={59}>
          <Small><Icon n="rotate" />旋转</Small><Small><Icon n="mirror" />镜像</Small><Small><Icon n="scale" />缩放</Small>
        </Stack>
        <Stack $w={71}>
          <Small aria-label="修剪"><Icon n="trim" /><Caret /></Small><Small aria-label="圆角"><Icon n="fillet" /><Caret /></Small><Small><Icon n="array" />阵列<Caret /></Small>
        </Stack>
        <Stack>
          {["erase", "box", "offset"].map((n) => <Small key={n} aria-label={n}><Icon n={n} /></Small>)}
        </Stack>
      </Panel>
      <Panel w={125} title="注释">
        <Big $w={49}><Art><path d="M13 2h6l10 27h-5l-3-8H11l-3 8H3zM16 7l-4 10h8z" fill="currentColor" fillRule="evenodd" stroke="none" /></Art>文字<Caret /></Big>
        <Big $w={36}><Art><path d="M.500 1v31M31.500 1v31M2 7h28" /><path d="M1 7l5-3v6zM31 7l-5-3v6z" fill="currentColor" stroke="none" /><path d="M15 16h2l1 7h-4zM8 19l2-1 3 6-1 1zM24 19l-2-1-3 6 1 1zM4 27l7 1-1 3H4zM28 27l-7 1 1 3h6z" fill="currentColor" stroke="none" /></Art>标注</Big>
        <Stack>
          <Small aria-label="线性"><Icon n="dim" /><Spacer /><Caret /></Small><Small aria-label="引线"><Icon n="leader" /><Spacer /><Caret /></Small><Small aria-label="表格"><Icon n="table" /></Small>
        </Stack>
      </Panel>
      <Panel w={251} title="图层">
        <Big $w={41}>
          <Art>
            <g fill="currentColor" stroke="none"><path d="M12 1h16L16 12H0zM6 14h22l-9 7H0zM6 23h13l-2 3H0z" /></g>
            <path d="M20 15h12v17H20z" fill="#8a909c" stroke={c.ribbon} />
            <path d="M22.500 17.500h7v6h-7zM22 27h8M22 30h8" stroke={c.ribbon} />
          </Art>
          图层<span>特性</span>
        </Big>
        <Stack $pad={0}>
          <Line>
            <Combo>
              <Muted><Icon n="bulb" /><Icon n="sun" /><Icon n="lock" /></Muted>
              <Swatch $s={14} $c="#b9bbbf" />
              <QuickSelect aria-label="图层"><option>0</option></QuickSelect>
              <Caret $size={4} />
            </Combo>
          </Line>
          <LayerLine>
            <LayerIcon badge="bulb" /><LayerIcon base="layers" badge="arrow" /><LayerIcon badge="flake" /><LayerIcon badge="lock" />
            <Small><LayerIcon base="layersUp" badge="none" />置为当前</Small>
          </LayerLine>
          <LayerLine>
            <LayerIcon base="layers" badge="bulb" /><LayerIcon base="layers" badge="up" /><LayerIcon base="layers" badge="sun" /><LayerIcon badge="unlock" />
            <Small><LayerIcon base="layers" badge="brush" />匹配图层</Small>
          </LayerLine>
        </Stack>
      </Panel>
      <Panel w={79} title="块">
        <Big $w={42}><Art><path d="M15 0h10l6 6v18H15z" fill="currentColor" stroke="none" opacity=".8" /><path d="M1 10h20v13H1z" fill="#595c62" /><circle cx="22" cy="24" r="7" fill="#5b6069" /></Art>插入<Caret /></Big>
        <Stack $pad={3}>
          <Small aria-label="创建"><Icon n="newBlock" /></Small><Small aria-label="编辑"><Icon n="editBlock" /></Small><Small aria-label="属性"><Icon n="attr" /><Spacer /><Caret /></Small>
        </Stack>
      </Panel>
      <Panel w={200} title="特性" corner>
        <Big $w={40}>
          <Art>
            <path d="M2 1h20v28H2z" fill="currentColor" stroke="none" />
            <path d="M4.500 3.500h15v10h-15zM4 19h16M4 24h14M9 17v4M15 22v4" stroke={c.ribbon} />
            <path d="M15 22l5-3 5 3 4-4 3 3-4 5 1 5-4 2z" fill="#858c99" stroke={c.ribbon} />
          </Art>
          特性<span>匹配</span>
        </Big>
        <Stack $pad={2}>
          <PropLine><Icon n="wheel" /><Combo $pad={11} $gap={9}><Swatch $s={16} $c="#a9abb0" /><BareSelect aria-label="颜色"><option>ByLayer</option></BareSelect><Caret $size={4} /></Combo></PropLine>
          <PropLine><Icon n="weights" /><Combo $dim><Rule /><BareSelect aria-label="线宽"><option>ByLayer</option></BareSelect><Caret $size={4} /></Combo></PropLine>
          <PropLine><Icon n="types" /><Combo $dim><Rule /><BareSelect aria-label="线型"><option>ByLayer</option></BareSelect><Caret $size={4} /></Combo></PropLine>
        </Stack>
      </Panel>
      <Panel w={67} title="组">
        <Big $w={42}><Art><path d="M5 5H1v26h4M19 5h4M23 16v15h-4M7 8.500h9v7H7z" /><circle cx="12" cy="24" r="4.500" fill="#5b6069" /><path d="M24 1l1 5 4-3-2 4 5 1-5 2 3 4-4-2-2 5-1-5-4 2 2-4-5-1 5-2-3-4 5 3z" fill="currentColor" stroke="none" /></Art>组</Big>
        <Stack $pad={3}>
          <Small aria-label="解除编组"><Icon n="ungroup" /></Small><Small aria-label="组编辑"><Icon n="editGroup" /></Small><Small $on aria-label="组选择"><Icon n="selGroup" /></Small>
        </Stack>
      </Panel>
      <Panel w={75} title="实用工具">
        <Big $w={49}><Art><path d="M2 12h28v7H2z" fill="currentColor" stroke="none" /><path d="M5 12v3M8 12v3M11 12v3M14 12v3M17 12v3M20 12v3M23 12v3M26 12v3" stroke={c.ribbon} /></Art>测量<Caret /></Big>
        <Stack $pad={4}>
          {["quickSel", "selAll", "calc"].map((n) => <Small key={n} aria-label={n}><Icon n={n} /></Small>)}
        </Stack>
      </Panel>
      <Panel w={75} title="剪贴板" menu={false}>
        <Big $w={49}><Art><path d="M3 3h22v25H3z" fill="#6b6e74" stroke="none" /><path d="M9 2h3l2-2 2 2h3v4H9z" fill="#8b919c" stroke="none" /><path d="M11 10h12l6 6v16H11z" fill="currentColor" stroke={c.ribbon} /></Art>粘贴<Caret /></Big>
        <Stack $pad={4}>
          <Small aria-label="剪切"><Icon n="cut" /></Small><Small aria-label="复制"><Icon n="clip" /></Small>
        </Stack>
      </Panel>
      <Panel w={60} title="视图" launcher>
        <Big $w={60}><Art><path d="M0 5h14v10h18v14H0z" fill="currentColor" stroke="none" /></Art>基点<Caret /></Big>
      </Panel>
    </Ribbon>
  );
}

const Spacer = styled.span`
  width: 0;
  margin-right: -4px;
`;

export default function App() {
  return (
    <Shell>
      <Global />
      <Header>
        <AppButton aria-label="应用程序菜单"><LetterA w={26} h={28} /><Caret $size={4} $dark /></AppButton>
        <HeaderRows>
          <TitleRow>
            {["open", "save", "saveAs", "openWeb", "saveWeb", "print", "undo"].map((n) => <Tool key={n} aria-label={n}><Icon n={n} /></Tool>)}
            <Tool $w={12} aria-label="放弃列表"><Caret /></Tool>
            <Tool $off aria-label="重做"><Icon n="redo" /></Tool>
            <Tool $w={12} $off aria-label="重做列表"><Caret /></Tool>
            <Tool aria-label="批处理打印"><Icon n="batch" /></Tool>
            <QuickLayer>
              <Icon n="bulb" /><Icon n="sun" /><Icon n="lock" /><Swatch $s={14} $c="#fff" />
              <QuickSelect aria-label="当前图层"><option>0</option></QuickSelect>
              <Caret $size={4} />
            </QuickLayer>
            <Tool aria-label="特性"><Icon n="sheet" /></Tool>
            <Tool $w={20} aria-label="更多"><Icon n="more" s={11} /></Tool>
            <DocTitle>Drawing1.d...</DocTitle>
            <TitleArrow><Icon n="play" s={14} /></TitleArrow>
            <Search aria-label="搜索" placeholder="鍵入关鍵字或短语" />
            <Tool $w={25} aria-label="查找"><Icon n="find" /></Tool>
            <Tool $w={25} aria-label="用户"><Icon n="user" /></Tool>
            <SignIn>登录</SignIn>
            <Tool $w={12} aria-label="登录选项"><Caret /></Tool>
            <Tool $w={26} aria-label="应用商店"><Icon n="cart" s={14} /></Tool>
            <Tool aria-label="Autodesk 360"><Icon n="a360" s={14} /></Tool>
            <Tool $w={12} aria-label="360 选项"><Caret /></Tool>
            <Divider />
            <Tool aria-label="帮助">
              <svg width="16" height="16" viewBox="0 0 16 16"><circle cx="8" cy="8" r="7.500" fill="#fff" /><text x="8" y="13" textAnchor="middle" fontSize="13" fontWeight="700" fill="#2d62a8">?</text></svg>
            </Tool>
            <Tool $w={12} aria-label="帮助选项"><Caret /></Tool>
            <Tail>
              <Tool $w={25} aria-label="最小化"><Icon n="min" /></Tool>
              <Tool $w={25} aria-label="最大化"><Icon n="max" /></Tool>
              <Tool $w={25} aria-label="关闭"><Icon n="close" /></Tool>
            </Tail>
          </TitleRow>
          <MenuRow>
            {menus.map((m) => <a key={m} href="#menu">{m}</a>)}
            <WindowTools>
              <Tool $w={18} aria-label="最小化图形"><Icon n="min" s={16} /></Tool>
              <Tool $w={18} aria-label="还原图形"><Icon n="restore" s={14} /></Tool>
              <Tool $w={18} aria-label="关闭图形"><Icon n="close" s={16} /></Tool>
            </WindowTools>
          </MenuRow>
        </HeaderRows>
      </Header>
      <Workspace>
        <RibbonTabs>
          {tabs.map((t, i) => <RibbonTab key={t} $on={i === 0}>{t}</RibbonTab>)}
          <Minimize aria-label="最小化功能区">
            <svg width="13" height="7" viewBox="0 0 13 7"><rect width="13" height="7" rx="2" fill="#d0d3d8" /><path d="M4 5l2.500-3L9 5z" fill="#30343f" /></svg>
            <Caret />
          </Minimize>
        </RibbonTabs>
        <RibbonPanels />
        <FileTabs>
          <FileTab>开始</FileTab>
          <FileTab $on>Drawing1*<button aria-label="关闭标签"><Icon n="close" s={12} /></button></FileTab>
          <AddTab aria-label="新图形"><Icon n="plus" s={14} /></AddTab>
        </FileTabs>
        <Stage>
          <Canvas>
            <Drawing />
            <ViewCube />
            <Navigation />
            <BlockDialog />
          </Canvas>
          <Scroll><Chevron d="M1 7l4-4 4 4" w={2} /></Scroll>
          <Scroll $row><Chevron d="M6 1L2 5l4 4" w={2} /></Scroll>
          <CommandBar>
            <svg width="12" height="18" viewBox="0 0 12 18"><path d="M4 0v18M7 0v18" stroke="#d6d9de" strokeWidth="1.500" strokeDasharray="2 1" /></svg>
            <Tool $w={14} aria-label="关闭命令行"><Icon n="close" s={13} /></Tool>
            <Tool $w={29} aria-label="自定义"><Icon n="wrench" s={15} /></Tool>
            <CommandField>
              <svg width="16" height="16" viewBox="0 0 16 16" fill="none" stroke="#d5d0d0"><path d="M1.500 4.500h8v8h-8z" /><circle cx="11" cy="12" r="3" /><path d="M11 1l1 2 3 0-2 2 1 3-3-1-2 1 0-3-2-2 3 0z" fill="#f7c774" stroke="none" /></svg>
              <Caret $size={4} $dark />
              <CommandText htmlFor="cmd"><b>BLOCK</b><span>BLOCK</span><Prompt>指定插入基点:</Prompt></CommandText>
              <CommandInput id="cmd" />
              <svg width="10" height="10" viewBox="0 0 10 10"><path d="M1 7h8L5 3z" fill="#55585f" /></svg>
            </CommandField>
          </CommandBar>
        </Stage>
        <Footer>
          <LayoutTab $on>模型</LayoutTab>
          <LayoutTab>布局1</LayoutTab>
          <LayoutTab>布局2</LayoutTab>
          <AddLayout aria-label="新布局"><Icon n="plus" s={14} /></AddLayout>
          <StatusSide>
            <StatusGroup><ModelBtn>模型</ModelBtn></StatusGroup>
            <StatusGroup>
              <StatusBtn $on aria-label="栅格"><Icon n="gridOn" /></StatusBtn>
              <StatusBtn aria-label="捕捉"><Icon n="dots" /></StatusBtn>
              <StatusBtn $w={14} aria-label="捕捉选项"><Caret /></StatusBtn>
            </StatusGroup>
            <StatusGroup>
              <StatusBtn aria-label="正交"><Icon n="ortho" /></StatusBtn>
              <StatusBtn aria-label="极轴"><Icon n="polar" /></StatusBtn>
              <StatusBtn $w={14} aria-label="极轴选项"><Caret /></StatusBtn>
              <StatusBtn aria-label="等轴测"><Icon n="iso" s={14} /></StatusBtn>
              <StatusBtn $w={15} aria-label="等轴测选项"><Caret /></StatusBtn>
            </StatusGroup>
          </StatusSide>
        </Footer>
      </Workspace>
      <Banner>
        <svg width="101" height="83" viewBox="130 175 300 245">
          <defs><linearGradient id="tower" x1="0" y1="0" x2="0" y2="1"><stop offset="0" stopColor="#1a3f93" /><stop offset=".4" stopColor="#1f489b" /><stop offset="1" stopColor="#7fa3d6" /></linearGradient></defs>
          <path d="M152 282C190 215 270 178 335 180c65 2 100 45 83 102-6-52-38-86-93-85-65 1-125 33-173 85z" fill="#97c92f" />
          <path d="M282 218l50 22v22l-38 20v82l-12 4zM358 275l40 17-40 38z" fill="#d9dadb" />
          <path d="M152 322l46-22v66c-20-2-36-10-46-28z" fill="#173f94" />
          <path d="M220 238l53-25v157h-53z" fill="url(#tower)" />
          <path d="M302 290l47-22v70l-47 22z" fill="#1b4599" />
          <path d="M145 303c-10 47 15 82 80 85 85 0 175-48 200-111 5 53-65 123-165 138-90 10-140-30-126-80 2-15 6-25 11-32z" fill="#163f93" />
        </svg>
        <BrandText><strong>土木工程网</strong><span>www.civilcn.com</span></BrandText>
      </Banner>
    </Shell>
  );
}
